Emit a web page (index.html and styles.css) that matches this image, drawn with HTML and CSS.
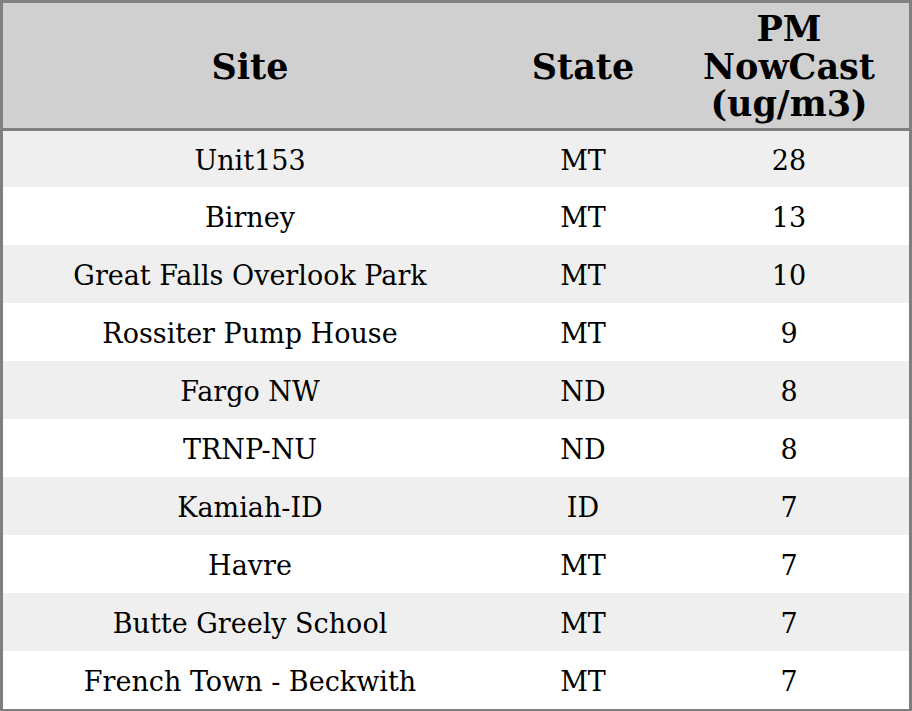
FILE: index.html
```html
<!DOCTYPE html>
<html lang="en">
<head>
<meta charset="utf-8">
<title>PM NowCast</title>
<link rel="stylesheet" href="styles.css">
</head>
<body>
<table class="data">
  <colgroup>
    <col class="c-site">
    <col class="c-state">
    <col class="c-pm">
  </colgroup>
  <thead>
    <tr><th>Site</th><th>State</th><th>PM<br>NowCast<br>(ug/m3)</th></tr>
  </thead>
  <tbody>
    <tr><td>Unit153</td><td>MT</td><td>28</td></tr>
    <tr><td>Birney</td><td>MT</td><td>13</td></tr>
    <tr><td>Great Falls Overlook Park</td><td>MT</td><td>10</td></tr>
    <tr><td>Rossiter Pump House</td><td>MT</td><td>9</td></tr>
    <tr><td>Fargo NW</td><td>ND</td><td>8</td></tr>
    <tr><td>TRNP-NU</td><td>ND</td><td>8</td></tr>
    <tr><td>Kamiah-ID</td><td>ID</td><td>7</td></tr>
    <tr><td>Havre</td><td>MT</td><td>7</td></tr>
    <tr><td>Butte Greely School</td><td>MT</td><td>7</td></tr>
    <tr><td>French Town - Beckwith</td><td>MT</td><td>7</td></tr>
  </tbody>
</table>
</body>
</html>
```
FILE: styles.css
```css
html, body {
  margin: 0;
  padding: 0;
  background: #ffffff;
}
.data {
  width: 912px;
  table-layout: fixed;
  border-collapse: separate;
  border-spacing: 0;
  border: 3px solid #808080;
  font-family: "DejaVu Serif", serif;
  color: #000;
}
.c-site { width: 494px; }
.c-state { width: 172px; }
.c-pm { width: 240px; }
.data thead tr { height: 128px; }
.data th {
  background: #d0d0d0;
  font-size: 35px;
  font-weight: bold;
  line-height: 37.5px;
  padding: 2px 0 0;
  text-align: center;
  vertical-align: middle;
  border-bottom: 3px solid #808080;
}
.data tbody tr { height: 58px; }
.data tbody tr:first-child { height: 56px; }
.data td {
  font-size: 27px;
  padding: 2px 0 0;
  text-align: center;
  vertical-align: middle;
}
.data tbody tr:nth-child(odd) td { background: #efefef; }
```
